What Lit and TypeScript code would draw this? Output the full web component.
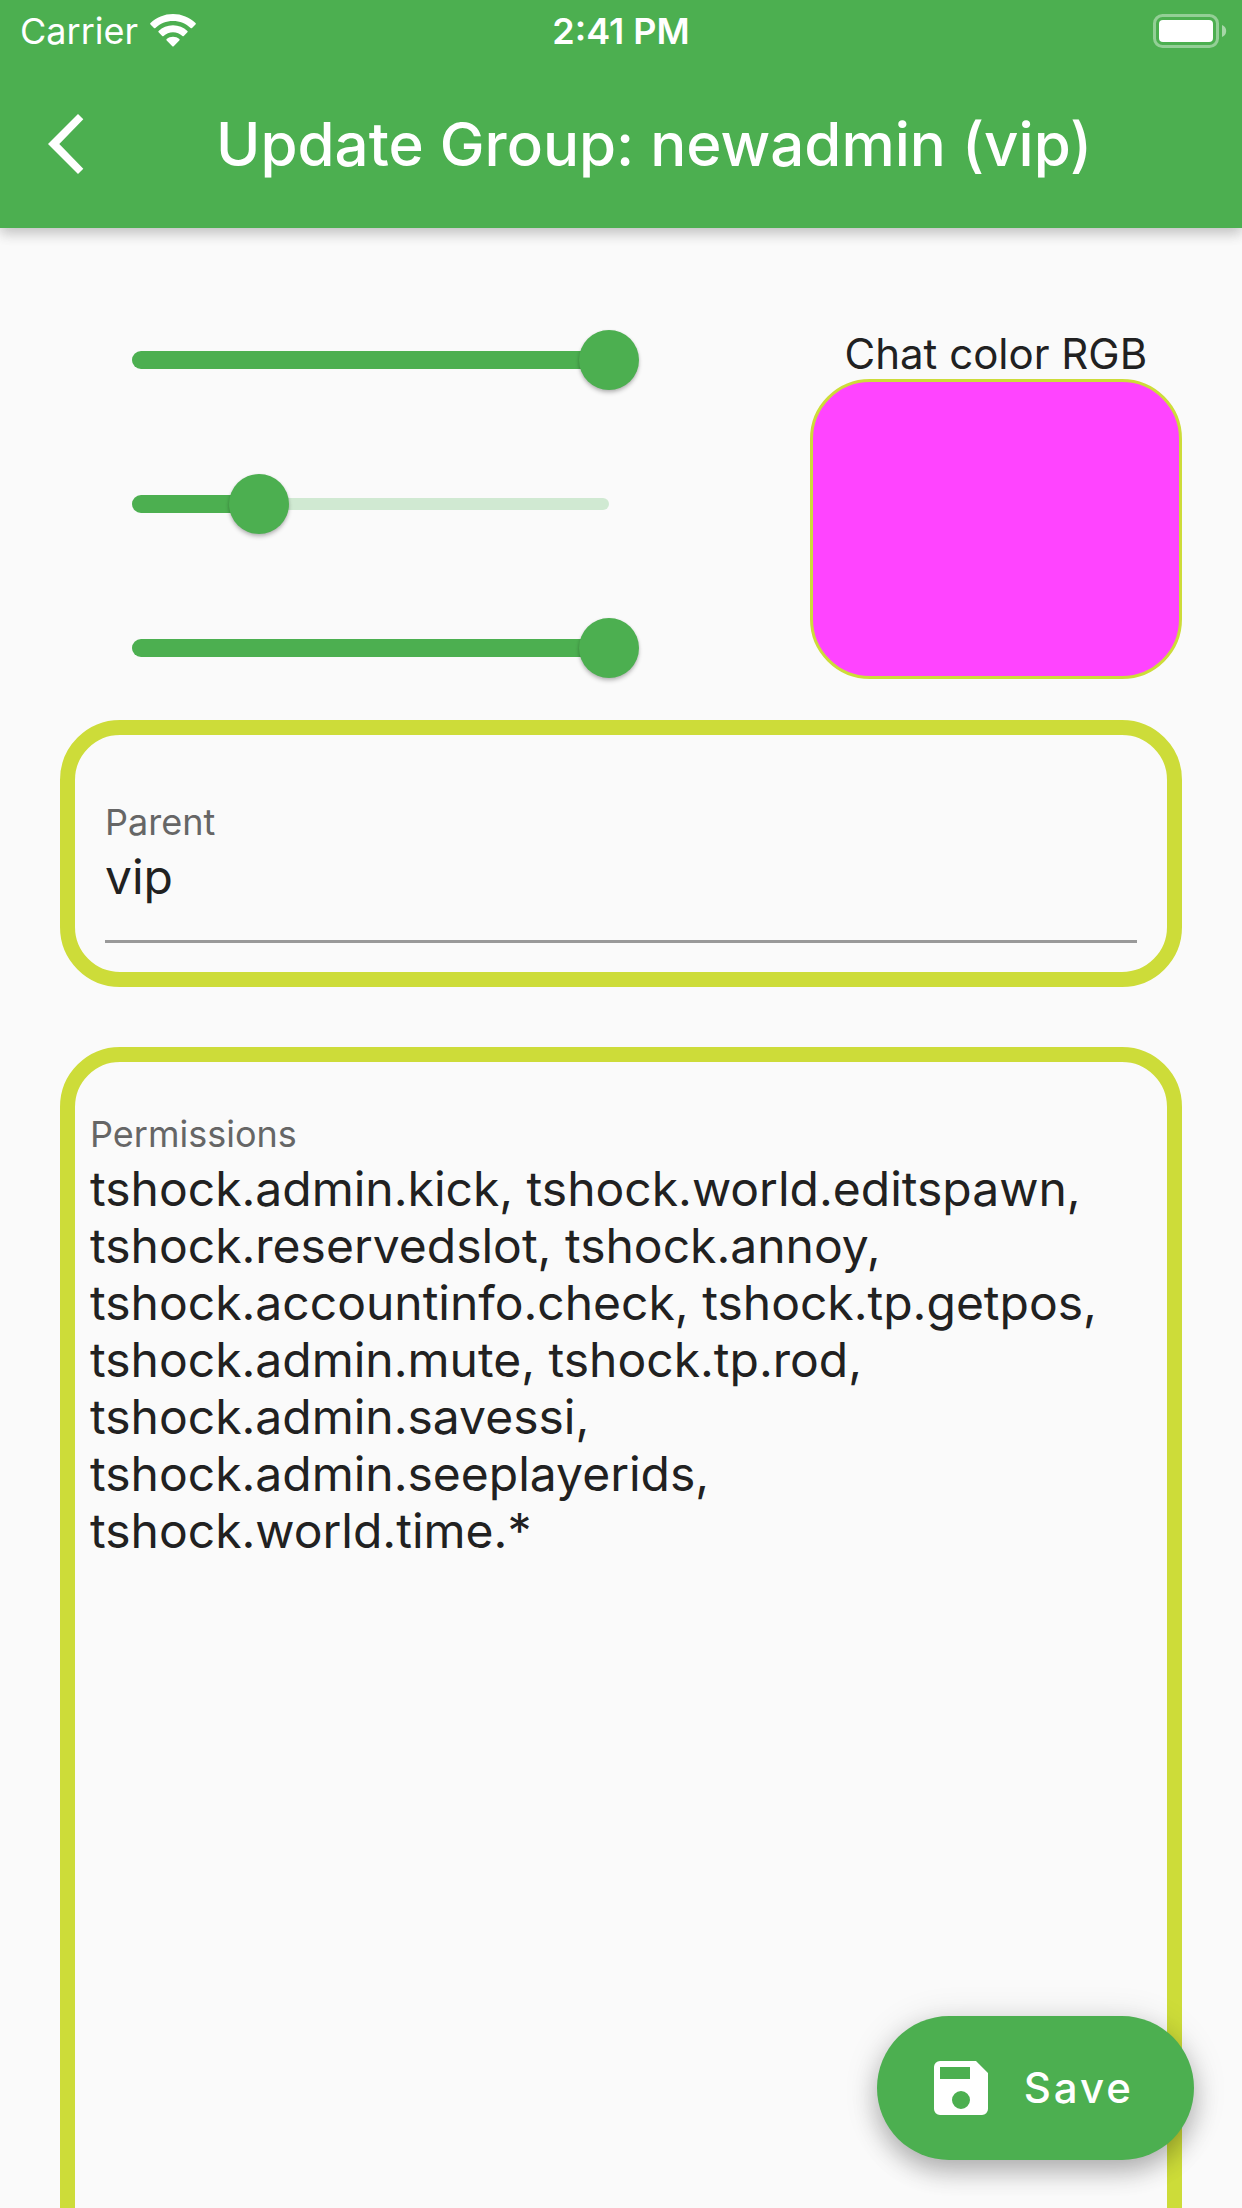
import { LitElement, html, css } from "lit";
import { customElement, property, state } from "lit/decorators.js";

/** Slider for one colour channel, 0 to 255. */
@customElement("channel-slider")
export class ChannelSlider extends LitElement {
  @property() label = "";
  @property({ type: Number }) value = 0;

  static styles = css`
    :host {
      display: block;
      padding: 0 42px;
    }
    .slider {
      display: grid;
      align-items: center;
      height: 144px;
    }
    .track,
    .fill-area,
    .range {
      grid-area: 1 / 1;
    }
    .track {
      height: 12px;
      margin: 0 30px;
      border-radius: 6px;
      background: #d0e9d2;
    }
    .fill-area {
      margin: 0 30px;
    }
    .fill {
      height: 18px;
      border-radius: 9px;
      background: #4caf50;
    }
    .range {
      appearance: none;
      -webkit-appearance: none;
      width: 100%;
      height: 60px;
      margin: 0;
      background: transparent;
    }
    .range::-webkit-slider-runnable-track {
      height: 60px;
      background: transparent;
    }
    .range::-webkit-slider-thumb {
      -webkit-appearance: none;
      width: 60px;
      height: 60px;
      border-radius: 50%;
      background: #4caf50;
      box-shadow: 0 3px 4px rgba(0, 0, 0, 0.2), 0 1px 3px rgba(0, 0, 0, 0.12);
    }
  `;

  private onInput(e: Event) {
    this.value = Number((e.target as HTMLInputElement).value);
    this.dispatchEvent(new CustomEvent("channel-change", { detail: this.value }));
  }

  render() {
    return html`
      <div class="slider">
        <div class="track"></div>
        <div class="fill-area">
          <div class="fill" style="width: ${(this.value / 255) * 100}%"></div>
        </div>
        <input
          class="range"
          type="range"
          min="0"
          max="255"
          aria-label=${this.label}
          .value=${String(this.value)}
          @input=${this.onInput}
        />
      </div>
    `;
  }
}

@customElement("app-root")
export class AppRoot extends LitElement {
  @state() private rgb = [255, 68, 255];

  static styles = css`
    :host {
      display: flex;
      flex-direction: column;
      position: relative;
      height: 100vh;
      overflow: hidden;
      background: #fafafa;
      color: #212121;
      font-family: Inter, "Liberation Sans", sans-serif;
    }
    * {
      box-sizing: border-box;
    }
    .top {
      flex: none;
      z-index: 1;
      background: #4caf50;
      color: #fff;
      box-shadow: 0 6px 12px rgba(0, 0, 0, 0.14), 0 3px 15px rgba(0, 0, 0, 0.12);
    }
    .status {
      display: grid;
      grid-template-columns: 1fr auto 1fr;
      align-items: center;
      height: 60px;
      padding: 2px 15px 0;
      font-size: 36px;
      line-height: 42px;
    }
    .carrier {
      display: flex;
      align-items: center;
      gap: 12px;
      padding-left: 5px;
    }
    .time {
      font-weight: 600;
    }
    .battery {
      justify-self: end;
    }
    svg {
      display: block;
    }
    .bar {
      display: flex;
      align-items: center;
      gap: 48px;
      height: 168px;
    }
    .back {
      display: grid;
      place-items: center;
      width: 168px;
      height: 168px;
      padding: 0;
      border: 0;
      background: none;
      color: inherit;
    }
    .title {
      margin: 0;
      font-size: 60px;
      line-height: 72px;
      font-weight: 500;
      white-space: nowrap;
    }
    .content {
      flex: 1;
      min-height: 0;
      overflow-y: auto;
      scrollbar-width: none;
      padding: 60px;
    }
    .color {
      display: grid;
      grid-template-columns: 5fr 3fr;
      gap: 129px;
      align-items: center;
    }
    .preview {
      text-align: center;
      font-size: 42px;
      line-height: 50px;
    }
    .swatch {
      height: 300px;
      border: 3px solid #cddc39;
      border-radius: 60px;
    }
    .card {
      display: flex;
      flex-direction: column;
      gap: 5px;
      border: 15px solid #cddc39;
      border-radius: 60px;
    }
    .card-parent {
      padding: 66px 30px 29px;
    }
    .card-permissions {
      min-height: 1400px;
      margin-top: 60px;
      padding: 51px 15px 30px;
    }
    .label {
      font-size: 36px;
      line-height: 42px;
      color: #666;
    }
    .field {
      display: block;
      width: 100%;
      margin: 0;
      padding: 0;
      border: 0;
      border-radius: 0;
      outline: none;
      background: none;
      color: inherit;
      font: inherit;
      font-size: 48px;
      line-height: 57px;
    }
    .parent {
      height: 95px;
      padding-bottom: 35px;
      border-bottom: 3px solid #999;
    }
    .permissions {
      flex: 1;
      resize: none;
      overflow: hidden;
    }
    .save {
      position: absolute;
      right: 48px;
      bottom: 48px;
      z-index: 1;
      display: flex;
      align-items: center;
      gap: 27px;
      height: 144px;
      padding: 0 60px 0 48px;
      border: 0;
      border-radius: 72px;
      background: #4caf50;
      color: #fff;
      font: inherit;
      font-size: 42px;
      line-height: 50px;
      font-weight: 500;
      letter-spacing: 3px;
      box-shadow: 0 12px 24px rgba(0, 0, 0, 0.24), 0 3px 36px rgba(0, 0, 0, 0.12);
    }
  `;

  private setChannel(index: number, value: number) {
    this.rgb = this.rgb.map((c, i) => (i === index ? value : c));
  }

  render() {
    return html`
      <header class="top">
        <div class="status">
          <div class="carrier">
            <span>Carrier</span>
            <svg width="46" height="34" viewBox="0 0 46 34" fill="currentColor" aria-hidden="true">
              <path d="M23 0C14.300 0 6.300 3.400.500 9.100a1 1 0 0 0 0 1.400l3.500 3.500a1 1 0 0 0 1.400 0C10 9.600 16.200 7 23 7s13 2.600 17.600 7a1 1 0 0 0 1.400 0l3.500-3.500a1 1 0 0 0 0-1.400C39.700 3.400 31.700 0 23 0Z" />
              <path d="M23 11.200c-5.600 0-10.600 2.200-14.400 5.700a1 1 0 0 0 0 1.400l3.600 3.600a1 1 0 0 0 1.400 0c2.500-2.300 5.800-3.700 9.400-3.700s6.900 1.400 9.400 3.700a1 1 0 0 0 1.400 0l3.600-3.600a1 1 0 0 0 0-1.400c-3.800-3.500-8.800-5.700-14.400-5.700Z" />
              <path d="M23 22.800c-2.400 0-4.600.8-6.300 2.200a1 1 0 0 0 0 1.500l5.600 5.700a1 1 0 0 0 1.400 0l5.600-5.700a1 1 0 0 0 0-1.500c-1.700-1.400-3.900-2.200-6.300-2.200Z" />
            </svg>
          </div>
          <div class="time">2:41 PM</div>
          <svg class="battery" width="74" height="34" viewBox="0 0 74 34" fill="none" aria-hidden="true">
            <rect x="1.500" y="1.500" width="63" height="31" rx="8" stroke="#fff" stroke-opacity=".4" stroke-width="3" />
            <rect x="6" y="6" width="54" height="22" rx="4" fill="#fff" />
            <path d="M69 11c2.600 1 4.200 3.300 4.200 6s-1.600 5-4.200 6Z" fill="#fff" fill-opacity=".5" />
          </svg>
        </div>
        <div class="bar">
          <button class="back" aria-label="Back">
            <svg width="72" height="72" viewBox="0 0 24 24" fill="currentColor" aria-hidden="true">
              <path d="M11.770 3.770 10 2 0 12l10 10 1.770-1.770L3.760 12z" />
            </svg>
          </button>
          <h1 class="title">Update Group: newadmin (vip)</h1>
        </div>
      </header>

      <main class="content">
        <section class="color">
          <div>
            ${["Red", "Green", "Blue"].map(
              (name, i) => html`
                <channel-slider
                  label=${name}
                  .value=${this.rgb[i]}
                  @channel-change=${(e: CustomEvent) => this.setChannel(i, e.detail)}
                ></channel-slider>
              `
            )}
          </div>
          <div class="preview">
            <div>Chat color RGB</div>
            <div class="swatch" style="background-color: rgb(${this.rgb.join(", ")})"></div>
          </div>
        </section>

        <div class="card card-parent">
          <label class="label" for="parent">Parent</label>
          <input class="field parent" id="parent" type="text" value="vip" />
        </div>

        <div class="card card-permissions">
          <label class="label" for="permissions">Permissions</label>
          <textarea
            class="field permissions"
            id="permissions"
            spellcheck="false"
            .value=${"tshock.admin.kick, tshock.world.editspawn, tshock.reservedslot, tshock.annoy, tshock.accountinfo.check, tshock.tp.getpos, tshock.admin.mute, tshock.tp.rod, tshock.admin.savessi, tshock.admin.seeplayerids, tshock.world.time.*"}
          ></textarea>
        </div>
      </main>

      <button class="save">
        <svg width="72" height="72" viewBox="0 0 24 24" fill="currentColor" aria-hidden="true">
          <path d="M17 3H5a2 2 0 0 0-2 2v14a2 2 0 0 0 2 2h14a2 2 0 0 0 2-2V7l-4-4zM12 19a3 3 0 1 1 0-6 3 3 0 0 1 0 6zm3-10H5V5h10v4z" />
        </svg>
        <span>Save</span>
      </button>
    `;
  }
}
